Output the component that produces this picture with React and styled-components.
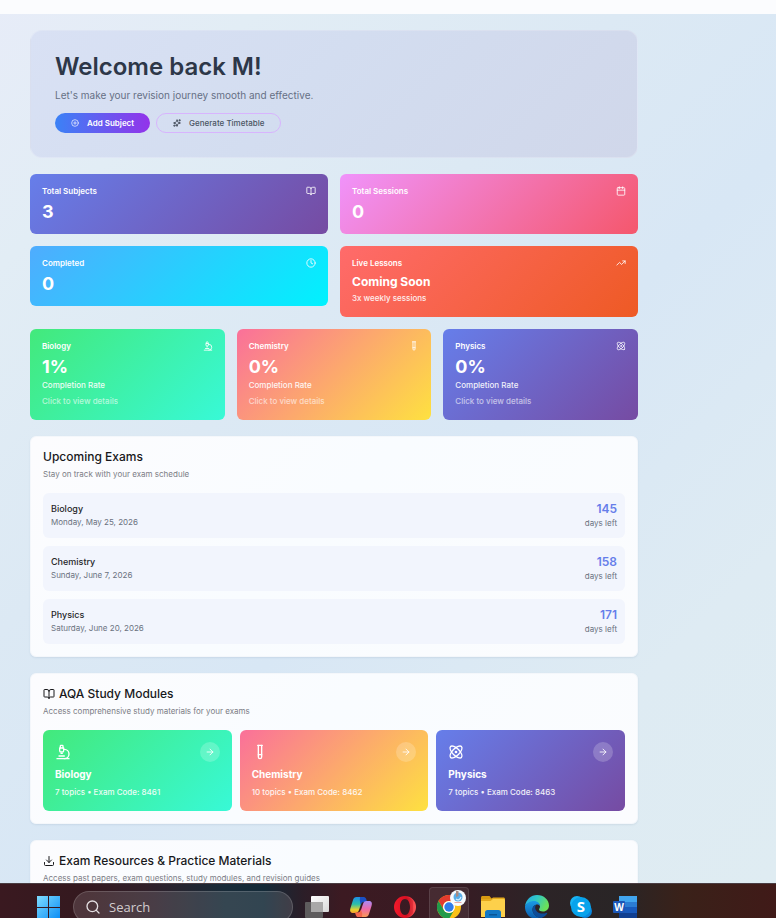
import React from 'react';
import styled, { createGlobalStyle } from 'styled-components';
import {
  ArrowRight,
  Atom,
  BookOpen,
  Calendar,
  CirclePlus,
  Clock,
  Download,
  Microscope,
  Search,
  Sparkles,
  TestTube,
  TrendingUp,
} from 'lucide-react';

const gradients = {
  indigo: 'linear-gradient(135deg, #667eea 0%, #764ba2 100%)',
  pink: 'linear-gradient(135deg, #f093fb 0%, #f5576c 100%)',
  cyan: 'linear-gradient(135deg, #4facfe 0%, #00f2fe 100%)',
  orange: 'linear-gradient(135deg, #ff6b6b 0%, #ee5a24 100%)',
  green: 'linear-gradient(135deg, #43e97b 0%, #38f9d7 100%)',
  sunset: 'linear-gradient(135deg, #fa709a 0%, #fee140 100%)',
};

const GlobalStyle = createGlobalStyle`
  * {
    box-sizing: border-box;
  }
  body {
    margin: 0;
    font-family: Inter, 'Liberation Sans', sans-serif;
    font-size: 8px;
    color: #18181b;
  }
  h1, h2, h3, p, ul {
    margin: 0;
    padding: 0;
  }
  button {
    font-family: inherit;
    cursor: pointer;
  }
`;

const Desktop = styled.div`
  display: flex;
  flex-direction: column;
  height: 100vh;
  overflow: hidden;
`;

const Page = styled.div`
  flex: 1;
  min-height: 0;
  overflow: hidden;
  background: linear-gradient(135deg, #e7ecf8 0%, #e2edf5 16%, #dce9f4 38%, #d8e7f5 56%, #deebf3 80%, #dfecf2 100%);
`;

const TopBar = styled.header`
  height: 14px;
  background: #fbfcfe;
`;

const Main = styled.main`
  display: flex;
  flex-direction: column;
  gap: 16px;
  padding: 16px 138px 16px 30px;
`;

const Hero = styled.section`
  padding: 24px;
  border: 1px solid rgba(255, 255, 255, 0.2);
  border-radius: 12px;
  background: linear-gradient(135deg, #d9e1f4 0%, #d3ddf0 45%, #d0d7ea 100%);
`;

const HeroTitle = styled.h1`
  font-size: 24px;
  font-weight: 600;
  line-height: 24px;
  color: #2d3748;
`;

const HeroText = styled.p`
  margin-top: 8px;
  font-size: 10px;
  line-height: 16px;
  color: #667085;
`;

const HeroActions = styled.div`
  display: flex;
  gap: 6px;
  margin-top: 10px;
`;

const PillButton = styled.button`
  display: flex;
  align-items: center;
  gap: 8px;
  height: 20px;
  padding: 0 16px;
  border: ${(props) => props.$primary ? '0' : '1px solid #d8b4fe'};
  border-radius: 10px;
  background: ${(props) => props.$primary ? 'linear-gradient(90deg, #3b82f6, #9333ea)' : 'transparent'};
  color: ${(props) => props.$primary ? '#fff' : '#4b5563'};
  font-size: 8px;
  font-weight: ${(props) => props.$primary ? 600 : 500};
`;

const Stats = styled.section`
  display: flex;
  flex-direction: column;
  gap: 12px;
`;

const CardGrid = styled.div`
  display: grid;
  grid-template-columns: repeat(${(props) => props.$columns}, 1fr);
  gap: ${(props) => props.$gap || '12px'};
  align-items: start;
`;

const StatCard = styled.article`
  padding: 12px;
  border-radius: 6px;
  background: ${(props) => gradients[props.$tone]};
  color: #fff;
`;

const SubjectCard = styled(StatCard).attrs({ as: 'button', type: 'button' })`
  display: block;
  border: 0;
  text-align: left;
`;

const CardTop = styled.span`
  display: flex;
  justify-content: space-between;
  align-items: center;
  height: 10px;
  font-size: 8px;
  font-weight: 600;
`;

const CardValue = styled.strong`
  display: block;
  margin-top: 6px;
  font-size: ${(props) => props.$small ? '12px' : '18px'};
  font-weight: 700;
  line-height: ${(props) => props.$small ? '16px' : '20px'};
`;

const CardNote = styled.span`
  display: block;
  margin-top: 2px;
  font-size: 8px;
  font-weight: 500;
  line-height: 13px;
  opacity: 0.9;
`;

const CardHint = styled(CardNote)`
  margin-top: 3px;
  opacity: 0.6;
`;

const Panel = styled.section`
  padding: 12px;
  border: 1px solid #f4f7fb;
  border-radius: 6px;
  background: linear-gradient(135deg, #fcfcfe 0%, #f9fcff 45%, #fbfcfe 100%);
  box-shadow: 0 1px 2px rgba(60, 90, 130, 0.1);
`;

const PanelTitle = styled.h2`
  display: flex;
  align-items: center;
  gap: 4px;
  font-size: 12px;
  font-weight: 500;
  line-height: 16px;
`;

const PanelText = styled.p`
  margin: 3px 0 13px;
  font-size: 8px;
  line-height: 12px;
  color: #7b7d85;
`;

const ExamList = styled.ul`
  display: flex;
  flex-direction: column;
  gap: 8px;
  list-style: none;
`;

const ExamRow = styled.li`
  display: flex;
  justify-content: space-between;
  align-items: flex-start;
  min-height: 45px;
  padding: 8px;
  border-radius: 6px;
  background: #f2f5fd;
`;

const ExamName = styled.h3`
  font-size: 9px;
  font-weight: 500;
  line-height: 15px;
  color: #27272a;
`;

const ExamText = styled.p`
  font-size: 8px;
  line-height: 12px;
  color: #6b7280;
`;

const Countdown = styled.div`
  text-align: right;
`;

const Days = styled.p`
  font-size: 12px;
  font-weight: 600;
  line-height: 16px;
  color: #667eea;
`;

const ModuleCard = styled(StatCard)`
  display: flex;
  flex-direction: column;
  gap: 4px;
`;

const ModuleTop = styled.div`
  display: flex;
  justify-content: space-between;
  align-items: center;
`;

const RoundButton = styled.button`
  display: grid;
  place-items: center;
  width: 20px;
  height: 20px;
  padding: 0;
  border: 0;
  border-radius: 50%;
  background: rgba(255, 255, 255, 0.2);
  color: #fff;
`;

const ModuleName = styled.h3`
  font-size: 10px;
  font-weight: 700;
  line-height: 16px;
`;

const ModuleText = styled.p`
  font-size: 8px;
  font-weight: 500;
  line-height: 13px;
  opacity: 0.9;
`;

const Taskbar = styled.nav`
  display: flex;
  align-items: flex-start;
  flex: none;
  height: 35px;
  padding: 3px 0 0 26px;
  overflow: hidden;
  border-top: 1px solid #4a3d42;
  background: linear-gradient(90deg, #3a1920 0%, #34191f 11%, #30202a 19%, #182b38 29%, #142a38 34%, #2b1e28 39%, #3c1a22 44%, #381b23 58%, #2c2427 70%, #292526 80%, #3a2119 88%, #401a18 100%);
`;

const TaskButton = styled.button`
  position: relative;
  display: grid;
  place-items: center;
  flex: none;
  width: 40px;
  height: 40px;
  margin: 0 2px;
  padding: 0;
  border: 1px solid ${(props) => props.$active ? 'rgba(255, 255, 255, 0.1)' : 'transparent'};
  border-radius: 4px;
  background: ${(props) => props.$active ? 'rgba(255, 255, 255, 0.07)' : 'transparent'};
`;

const SearchBox = styled.label`
  display: flex;
  align-items: center;
  gap: 8px;
  flex: none;
  width: 220px;
  height: 32px;
  margin: 4px 2px 0 3px;
  padding: 0 11px;
  border: 1px solid rgba(255, 255, 255, 0.16);
  border-radius: 16px;
  background: rgba(255, 255, 255, 0.13);
  color: #e4dfe2;
`;

const SearchInput = styled.input`
  min-width: 0;
  flex: 1;
  padding: 0;
  border: 0;
  outline: none;
  background: transparent;
  color: inherit;
  font-family: 'Open Sans', sans-serif;
  font-size: 13px;
  &::placeholder {
    color: #d2cccf;
    opacity: 1;
  }
`;

// profile picture sitting over the browser icon
const ProfileBadge = styled.svg`
  position: absolute;
  top: 2px;
  right: 2px;
`;

const WindowsLogo = () => (
  <svg width="24" height="24" viewBox="0 0 24 24">
    <defs>
      <linearGradient id="win" x1="0" y1="0" x2="1" y2="1">
        <stop offset="0" stopColor="#7edcff" />
        <stop offset="1" stopColor="#0a8cf5" />
      </linearGradient>
    </defs>
    <path fill="url(#win)" d="M1 1h11v11H1zM13 1h11v11H13zM1 13h11v11H1zM13 13h11v11H13z" />
  </svg>
);

const TaskViewLogo = () => (
  <svg width="24" height="24" viewBox="0 0 24 24">
    <defs>
      <linearGradient id="tv" x1="0" y1="0" x2="1" y2="1">
        <stop offset="0" stopColor="#fff" />
        <stop offset="1" stopColor="#d8d8d8" />
      </linearGradient>
    </defs>
    <rect x="6" y="1" width="18" height="16" rx="1" fill="url(#tv)" />
    <rect x="0" y="7" width="18" height="16" rx="1" fill="#5e5c5d" />
    <path d="M6 7h12v10H6z" fill="#a9a8a8" />
  </svg>
);

const CopilotLogo = () => (
  <svg width="24" height="24" viewBox="0 0 24 24">
    <defs>
      <linearGradient id="cpA" x1="0" y1="0" x2="0" y2="1">
        <stop offset="0" stopColor="#1c8fe8" />
        <stop offset=".45" stopColor="#2cbfa8" />
        <stop offset=".8" stopColor="#e9d22a" />
        <stop offset="1" stopColor="#f39a2d" />
      </linearGradient>
      <linearGradient id="cpB" x1="0" y1="0" x2="0" y2="1">
        <stop offset="0" stopColor="#a98af5" />
        <stop offset=".5" stopColor="#ee6aa8" />
        <stop offset="1" stopColor="#fb9a55" />
      </linearGradient>
    </defs>
    <path fill="url(#cpA)" d="M7.500 2h8c-1.500 1-2.300 3-3 5.500L10 15c-.6 1.900-1.500 3-3.500 3H4C1 18 .7 15.500 1.500 13L4 5c.6-2 1.700-3 3.500-3z" />
    <path fill="#1a4fc4" d="M11 2h3.500c1.700 0 2.400 1 2.900 2.600L18 7h-3c-2 0-2.800 1-3.400 3l-.8-5z" />
    <path fill="url(#cpB)" d="M16.500 22h-8c1.500-1 2.300-3 3-5.500L14 9c.6-1.900 1.500-3 3.500-3H20c3 0 3.300 2.500 2.500 5L20 19c-.6 2-1.700 3-3.500 3z" />
    <path fill="#f4664d" d="M13 22H9.500c-1.700 0-2.400-1-2.900-2.600L6 17.500h2.500c2 0 2.800-1 3.400-3l1.300 4z" />
  </svg>
);

const OperaLogo = () => (
  <svg width="24" height="24" viewBox="0 0 24 24">
    <defs>
      <linearGradient id="op" x1="0" y1="0" x2="1" y2="0">
        <stop offset="0" stopColor="#f21a2b" />
        <stop offset=".55" stopColor="#d90f22" />
        <stop offset="1" stopColor="#ff5a5a" />
      </linearGradient>
    </defs>
    <path fill="url(#op)" fillRule="evenodd" d="M12 1a11 11 0 1 0 0 22 11 11 0 0 0 0-22zm0 3c3 0 5 3.500 5 8s-2 8-5 8-5-3.500-5-8 2-8 5-8z" />
    <path fill="#b00a1c" d="M12 4c2-1.700 4.500-1.500 6.500.2L20 6v12l-1.500 1.800c-2 1.700-4.500 1.900-6.500.2 3 0 5-3.500 5-8s-2-8-5-8z" opacity=".3" />
  </svg>
);

const ChromeLogo = () => (
  <svg width="24" height="24" viewBox="0 0 24 24">
    <circle cx="12" cy="12" r="12" fill="#fbc116" />
    <path fill="#e33b2e" d="M1.600 6A12 12 0 0 1 22.400 6H12a6 6 0 0 0-5.200 9z" />
    <path fill="#229a4a" d="M1.600 6A12 12 0 0 0 12 24l5.200-9A6 6 0 0 1 6.800 15z" />
    <circle cx="12" cy="12" r="6" fill="#fff" />
    <circle cx="12" cy="12" r="4.700" fill="#2f7de9" />
  </svg>
);

const FolderLogo = () => (
  <svg width="24" height="24" viewBox="0 0 24 24">
    <path fill="#d89a12" d="M0 2.500C0 1.700.7 1 1.500 1h7l2.500 3H0z" />
    <path fill="#e5a91c" d="M0 4h10l2-1.500h10.500c.8 0 1.500.7 1.500 1.500v18H0z" />
    <path fill="#fdd04b" d="M0 6h9.500l2.500-2h10.500c.8 0 1.500.7 1.500 1.500V22H0z" />
    <path fill="#1277c4" d="M4 17.500C4 16 5 15 6.500 15h11c1.500 0 2.500 1 2.500 2.500V23H4z" />
    <path fill="#0a5798" d="M8 19h8v1.500H8z" />
  </svg>
);

const EdgeLogo = () => (
  <svg width="24" height="24" viewBox="0 0 24 24">
    <defs>
      <linearGradient id="edA" x1="0" y1="0" x2="1" y2=".4">
        <stop offset="0" stopColor="#22a7e8" />
        <stop offset=".5" stopColor="#31c8c4" />
        <stop offset="1" stopColor="#6ae05a" />
      </linearGradient>
      <linearGradient id="edB" x1="0" y1="0" x2="0" y2="1">
        <stop offset="0" stopColor="#1a9be6" />
        <stop offset="1" stopColor="#0c59a8" />
      </linearGradient>
    </defs>
    <path fill="url(#edA)" d="M0 11C1 4.500 6 0 12 0c7 0 12 5 12 10.500 0 3.500-2.500 6-6 6-2.500 0-4-1-4-2 0-.8 1-1.200 1-3 0-2.500-2.500-4.500-6-4.500-4 0-7.500 2-9 4z" />
    <path fill="url(#edB)" d="M0 11c1.500-2.800 5-5 9-5 3.500 0 6 2.500 6 5-.8-1.200-2-1.800-3.500-1.500C9 10 7.500 12 7.500 14.500c0 4 3.500 8 9 8.500-1.300.6-3 1-4.500 1C5 24 0 18.500 0 12z" />
    <path fill="#0d4d99" d="M11.500 9.500C9 10 7.500 12 7.500 14.500c0 4 3.500 8.500 9 8.500 2.700-1 4.700-2.800 5.800-4.700.2-.5-.2-.8-.6-.6-5.200 2.400-11.500-.4-11.500-5 0-1.300.5-2.500 1.300-3.200z" />
  </svg>
);

const SkypeLogo = () => (
  <svg width="24" height="24" viewBox="0 0 24 24">
    <circle cx="8" cy="8" r="7" fill="#1ab5f5" />
    <circle cx="16" cy="16" r="7" fill="#0a86dd" />
    <circle cx="12" cy="12" r="10" fill="#08a3ec" />
    <text x="12" y="17" textAnchor="middle" fontFamily="Open Sans" fontSize="15" fontWeight="700" fill="#fff">S</text>
  </svg>
);

const WordLogo = () => (
  <svg width="24" height="24" viewBox="0 0 24 24">
    <path fill="#41a5ee" d="M6 1h18v6H6z" />
    <path fill="#2b7cd3" d="M6 7h18v5H6z" />
    <path fill="#185abd" d="M6 12h18v6H6z" />
    <path fill="#103f91" d="M6 18h18v5H6z" />
    <rect y="6" width="12" height="12" rx="1" fill="#1b57b8" />
    <text x="6" y="15.500" textAnchor="middle" fontFamily="Open Sans" fontSize="10" fontWeight="700" fill="#fff">W</text>
  </svg>
);

const stats = [
  { label: 'Total Subjects', value: '3', tone: 'indigo', icon: BookOpen },
  { label: 'Total Sessions', value: '0', tone: 'pink', icon: Calendar },
  { label: 'Completed', value: '0', tone: 'cyan', icon: Clock },
  { label: 'Live Lessons', value: 'Coming Soon', note: '3x weekly sessions', tone: 'orange', icon: TrendingUp },
];

const subjects = [
  {
    name: 'Biology', rate: '1%', tone: 'green', icon: Microscope,
    topics: 7, code: 8461, date: 'Monday, May 25, 2026', days: 145,
  },
  {
    name: 'Chemistry', rate: '0%', tone: 'sunset', icon: TestTube,
    topics: 10, code: 8462, date: 'Sunday, June 7, 2026', days: 158,
  },
  {
    name: 'Physics', rate: '0%', tone: 'indigo', icon: Atom,
    topics: 7, code: 8463, date: 'Saturday, June 20, 2026', days: 171,
  },
];

const apps = [
  { name: 'Task view', logo: TaskViewLogo },
  { name: 'Copilot', logo: CopilotLogo },
  { name: 'Opera', logo: OperaLogo },
  { name: 'Chrome', logo: ChromeLogo, active: true },
  { name: 'File Explorer', logo: FolderLogo },
  { name: 'Edge', logo: EdgeLogo },
  { name: 'Skype', logo: SkypeLogo },
  { name: 'Word', logo: WordLogo },
];

const App = () => {
  return (
    <Desktop>
      <GlobalStyle />
      <Page>
        <TopBar />
        <Main>
          <Hero>
            <HeroTitle>Welcome back M!</HeroTitle>
            <HeroText>Let's make your revision journey smooth and effective.</HeroText>
            <HeroActions>
              <PillButton type="button" $primary>
                <CirclePlus size={8} />
                Add Subject
              </PillButton>
              <PillButton type="button">
                <Sparkles size={8} strokeWidth={3} />
                Generate Timetable
              </PillButton>
            </HeroActions>
          </Hero>

          <Stats>
            <CardGrid $columns={2}>
              {stats.map(({ label, value, note, tone, icon: Icon }) => (
                <StatCard key={label} $tone={tone}>
                  <CardTop>
                    {label}
                    <Icon size={10} />
                  </CardTop>
                  <CardValue $small={Boolean(note)}>{value}</CardValue>
                  {note && <CardNote>{note}</CardNote>}
                </StatCard>
              ))}
            </CardGrid>
            <CardGrid $columns={3}>
              {subjects.map(({ name, rate, tone, icon: Icon }) => (
                <SubjectCard key={name} $tone={tone}>
                  <CardTop>
                    {name}
                    <Icon size={10} />
                  </CardTop>
                  <CardValue>{rate}</CardValue>
                  <CardNote>Completion Rate</CardNote>
                  <CardHint>Click to view details</CardHint>
                </SubjectCard>
              ))}
            </CardGrid>
          </Stats>

          <Panel>
            <PanelTitle>Upcoming Exams</PanelTitle>
            <PanelText>Stay on track with your exam schedule</PanelText>
            <ExamList>
              {subjects.map(({ name, date, days }) => (
                <ExamRow key={name}>
                  <div>
                    <ExamName>{name}</ExamName>
                    <ExamText>{date}</ExamText>
                  </div>
                  <Countdown>
                    <Days>{days}</Days>
                    <ExamText>days left</ExamText>
                  </Countdown>
                </ExamRow>
              ))}
            </ExamList>
          </Panel>

          <Panel>
            <PanelTitle>
              <BookOpen size={12} />
              AQA Study Modules
            </PanelTitle>
            <PanelText>Access comprehensive study materials for your exams</PanelText>
            <CardGrid $columns={3} $gap="8px">
              {subjects.map(({ name, topics, code, tone, icon: Icon }) => (
                <ModuleCard key={name} $tone={tone}>
                  <ModuleTop>
                    <Icon size={16} />
                    <RoundButton type="button" aria-label={`Open ${name}`}>
                      <ArrowRight size={10} />
                    </RoundButton>
                  </ModuleTop>
                  <ModuleName>{name}</ModuleName>
                  <ModuleText>{topics} topics • Exam Code: {code}</ModuleText>
                </ModuleCard>
              ))}
            </CardGrid>
          </Panel>

          <Panel>
            <PanelTitle>
              <Download size={12} />
              Exam Resources &amp; Practice Materials
            </PanelTitle>
            <PanelText>Access past papers, exam questions, study modules, and revision guides</PanelText>
          </Panel>
        </Main>
      </Page>

      <Taskbar>
        <TaskButton type="button" aria-label="Start">
          <WindowsLogo />
        </TaskButton>
        <SearchBox>
          <Search size={16} />
          <SearchInput type="text" placeholder="Search" aria-label="Search" />
        </SearchBox>
        {apps.map(({ name, logo: Logo, active }) => (
          <TaskButton key={name} type="button" aria-label={name} $active={active}>
            <Logo />
            {active && (
              <ProfileBadge width="16" height="16" viewBox="0 0 16 16">
                <circle cx="8" cy="8" r="8" fill="#f7fafc" />
                <circle cx="8" cy="7" r="4.500" fill="#5aaee8" />
                <path d="M6 1h2.500v5L6 7z" fill="#a98a80" />
                <path d="M6 9c2 1.500 4 1 5-2" stroke="#d5efff" strokeWidth="1.200" fill="none" />
                <path d="M4.500 12.500h7" stroke="#e8a9a4" strokeWidth="1" />
              </ProfileBadge>
            )}
          </TaskButton>
        ))}
      </Taskbar>
    </Desktop>
  );
};

export default App;
